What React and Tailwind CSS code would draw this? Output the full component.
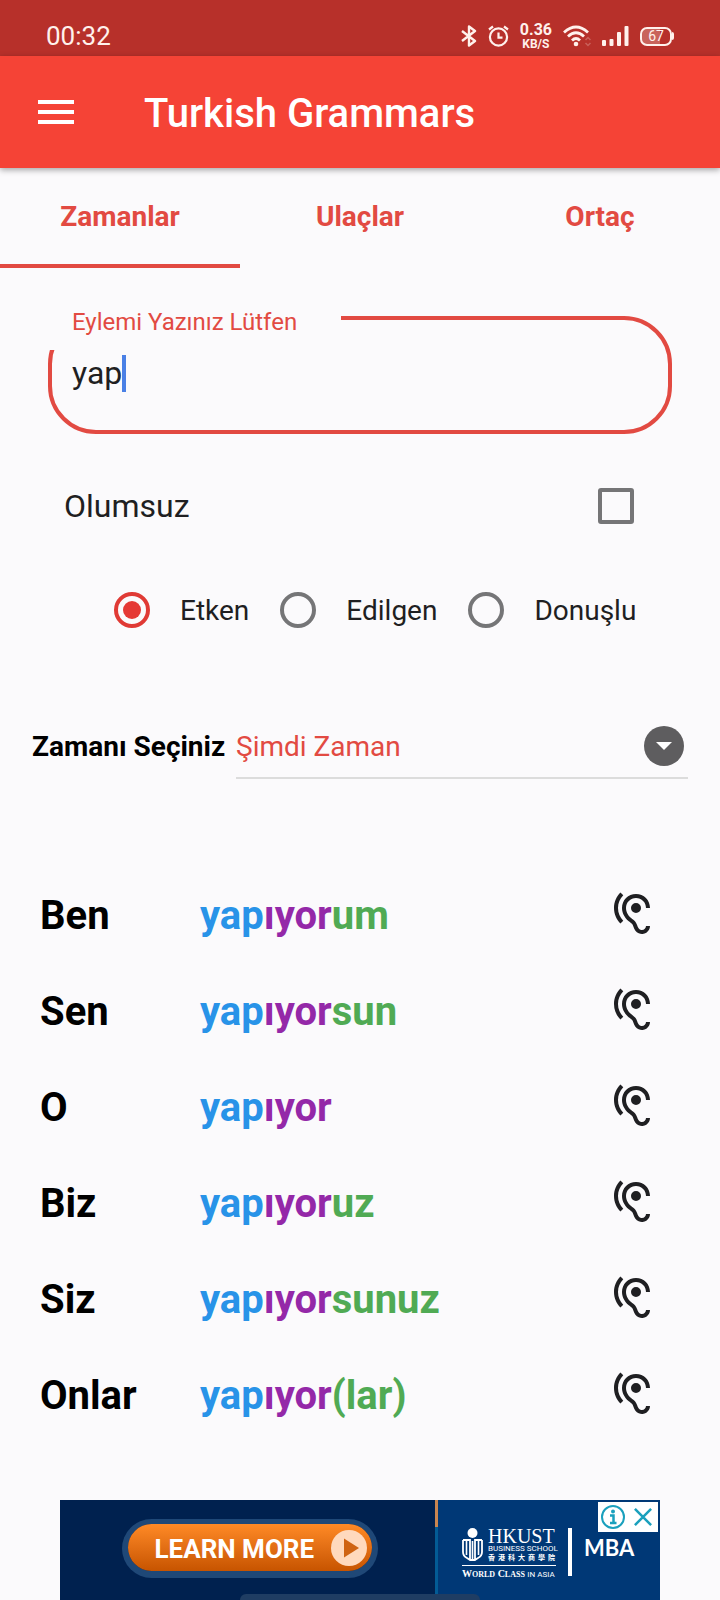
import { useState } from "react";
import { MdHearing } from "react-icons/md";

const RED = "text-[#e24a42]";

const rows = [
  { who: "Ben", end: "um" },
  { who: "Sen", end: "sun" },
  { who: "O", end: "" },
  { who: "Biz", end: "uz" },
  { who: "Siz", end: "sunuz" },
  { who: "Onlar", end: "(lar)" },
];

function StatusBar() {
  return (
    <div className="flex h-14 items-end justify-between bg-[#b7302a] pr-12 pb-1.5 pl-[46px] text-[#fff1ec]">
      <span className="text-[26px] leading-7">00:32</span>
      <div className="flex h-7 items-center gap-[11px]">
        <svg className="h-[22px] w-4" viewBox="0 0 16 22" fill="none" stroke="currentColor" strokeWidth="2.4">
          <path d="M1 6 L14 16 L8 20.5 V1.5 L14 6 L1 16" strokeLinejoin="round" />
        </svg>
        <svg className="h-[22px] w-[21px]" viewBox="0 0 21 22" fill="none" stroke="currentColor" strokeWidth="2.2">
          <circle cx="10.5" cy="12" r="8.6" />
          <path d="M10.5 7.5 V12.7 H14.5 M1 4.5 L5 1.5 M16 1.5 L20 4.5" />
        </svg>
        <div className="flex flex-col items-center font-bold">
          <span className="text-base leading-4">0.36</span>
          <span className="text-xs leading-3">KB/S</span>
        </div>
        <svg className="h-[22px] w-[28px]" viewBox="0 0 28 22" fill="none" stroke="currentColor" strokeWidth="2.8">
          <path d="M1 7.5 Q13 -3.5 25 7.5" />
          <path d="M5 11.5 Q13 4 21 11.5" />
          <path d="M9 15.5 Q13 11.5 17 15.5" />
          <circle cx="13" cy="19" r="2.3" fill="currentColor" stroke="none" />
          <path d="M22.5 15 L25 12.5 L27.5 15 M22.5 18 L25 20.5 L27.5 18" strokeWidth="1.5" opacity="0.25" />
        </svg>
        <svg className="h-[22px] w-[27px]" viewBox="0 0 27 22" fill="currentColor">
          <rect x="0" y="15" width="4" height="6" rx="1" />
          <rect x="7.5" y="14" width="4" height="7" rx="1" />
          <rect x="15" y="7" width="4" height="14" rx="1" />
          <rect x="22.5" y="1" width="4" height="20" rx="1" />
        </svg>
        <div className="relative flex h-[19px] w-8 items-center justify-center rounded-[7px] border-2 border-current bg-linear-to-r from-[#c9635b] from-65% to-[#b7302a] to-65% text-sm leading-4 after:absolute after:-right-1 after:h-2 after:w-0.5 after:rounded-r after:bg-current">
          67
        </div>
      </div>
    </div>
  );
}

function Ad() {
  return (
    <aside className="mx-[60px] grid h-[100px] grid-cols-[375fr_3px_222fr] overflow-hidden bg-[#00214f] text-white">
      <div className="flex items-start justify-center pt-6 pl-1">
        <button className="flex h-[47px] w-[244px] items-center justify-between rounded-full bg-linear-to-b from-[#ff8a25] to-[#c75400] pr-[5px] pl-[27px] shadow-[0_1px_0_6px_#1f4877]">
          <span className="pt-0.5 text-[26px] leading-8 font-bold whitespace-nowrap">LEARN MORE</span>
          <svg className="size-9 shrink-0" viewBox="0 0 36 36">
            <circle cx="18" cy="18" r="18" fill="#ffd9bd" />
            <path d="M13 8.5 L28 18 L13 27.5 Z" fill="#cf6312" />
          </svg>
        </button>
      </div>
      <div className="flex flex-col">
        <div className="h-[27px] bg-[#c98550]" />
        <div className="flex-1 bg-[#035b95]" />
      </div>
      <div className="relative flex items-start bg-[#003876] pt-7 pl-6">
        <div className="flex w-[94px] flex-col">
          <div className="flex gap-[5px] border-b border-white pb-[3px]">
            <svg className="h-[33px] w-[21px] shrink-0" viewBox="0 0 21 33" fill="none" stroke="white">
              <circle cx="10.5" cy="5" r="5" fill="white" stroke="none" />
              <path d="M1 12 V24 Q1 28 5 30 L8 32 V12 H1 M20 12 V24 Q20 28 16 30 L13 32 V12 H20 M8 32 H13" strokeWidth="1.8" />
              <path d="M4.5 13 V27 M16.5 13 V27 M10.5 13 V32" strokeWidth="1.6" />
            </svg>
            <div className="flex flex-col whitespace-nowrap">
              <span className="font-['Liberation_Serif'] text-[20px] leading-4">HKUST</span>
              <span className="text-[8px] leading-[9px]">BUSINESS SCHOOL</span>
              <span className="flex w-[67px] justify-between font-['Noto_Sans_CJK_TC'] text-[7px] leading-[9px] font-bold">
                {[..."香港科大商學院"].map((char) => (
                  <span key={char}>{char}</span>
                ))}
              </span>
            </div>
          </div>
          <div className="pt-[3px] text-[10px] leading-[10px] whitespace-nowrap">
            <span className="font-['Liberation_Serif'] font-bold">
              W<span className="text-[8px]">ORLD</span> C<span className="text-[8px]">LASS</span>
            </span>{" "}
            <span className="text-[8px]">IN ASIA</span>
          </div>
        </div>
        <div className="ml-3 h-12 w-1 bg-white" />
        <span className="mt-1.5 ml-3 font-['Lato'] text-[22px] leading-7 font-bold">MBA</span>
        <div className="absolute top-0.5 right-0.5 flex h-[30px] w-[60px] items-center justify-between bg-white pr-1.5 pl-[3px] text-[#1aa0bd]">
          <button aria-label="Ad information">
            <svg className="size-6" viewBox="0 0 24 24" fill="none" stroke="currentColor" strokeWidth="2">
              <circle cx="12" cy="12" r="11" />
              <circle cx="12" cy="6.5" r="2" fill="currentColor" stroke="none" />
              <path d="M9 10.5 H12.5 V18 M9 18 H15.5" strokeWidth="2.5" />
            </svg>
          </button>
          <button aria-label="Close ad">
            <svg className="size-[18px]" viewBox="0 0 20 20" stroke="currentColor" strokeWidth="2.8">
              <path d="M1 1 L19 19 M19 1 L1 19" />
            </svg>
          </button>
        </div>
      </div>
    </aside>
  );
}

export default function App() {
  const [voice, setVoice] = useState("Etken");
  return (
    <div className="relative min-h-screen overflow-hidden bg-[#fbfafc] font-['Roboto',sans-serif] text-[#1f1f22]">
      <StatusBar />
      <header className="relative flex h-28 items-center bg-[#f54336] pl-[38px] text-white shadow-[0_2px_6px_rgba(0,0,0,0.35)]">
        <button aria-label="Menu">
          <svg className="h-6 w-9" viewBox="0 0 36 24" fill="currentColor">
            <path d="M0 0H36V4H0ZM0 10H36V14H0ZM0 20H36V24H0Z" />
          </svg>
        </button>
        <h1 className="ml-[70px] pt-1 text-[40px] leading-12 font-medium">Turkish Grammars</h1>
      </header>
      <nav className={`grid h-[100px] grid-cols-3 text-[28px] leading-8 font-bold ${RED}`}>
        <button className="border-b-4 border-[#e24a42] pt-0.5">Zamanlar</button>
        <button className="border-b-4 border-transparent pt-0.5">Ulaçlar</button>
        <button className="border-b-4 border-transparent pt-0.5">Ortaç</button>
      </nav>

      <main>
        <div className="relative mx-12 mt-12 h-[118px] rounded-[48px] border-4 border-[#e24a42]">
          <label
            htmlFor="verb"
            className={`absolute -top-1 -left-1 h-[34px] w-[293px] bg-[#fbfafc] pl-6 text-2xl leading-3 ${RED}`}
          >
            Eylemi Yazınız Lütfen
          </label>
          <input
            id="verb"
            type="text"
            defaultValue="yap"
            className="mt-[33px] block h-10 w-full bg-transparent px-5 text-[32px] leading-10 outline-none"
          />
          <span className="absolute top-[35px] left-[70px] h-[37px] w-1 bg-[#4a80e6]" />
        </div>

        <div className="mt-[50px] flex h-11 items-center justify-between pr-[86px] pl-16">
          <label htmlFor="negative" className="text-[32px] leading-10">
            Olumsuz
          </label>
          <input
            id="negative"
            type="checkbox"
            className="size-9 appearance-none rounded-[3px] border-4 border-[#757577] checked:bg-[#e53935]"
          />
        </div>

        <div className="mt-16 flex h-9 items-center gap-[31px] pl-[114px] text-[28px] leading-8">
          {["Etken", "Edilgen", "Donuşlu"].map((name) => (
            <label key={name} className="flex items-center gap-[30px]">
              <input
                type="radio"
                name="voice"
                checked={voice === name}
                onChange={() => setVoice(name)}
                className="size-9 appearance-none rounded-full border-4 border-[#757577] checked:border-[#e03a35] checked:bg-[#e53935] checked:bg-clip-content checked:p-[5px]"
              />
              <span className="pt-0.5">{name}</span>
            </label>
          ))}
        </div>

        <div className="mt-[87px] flex items-center px-8 text-[28px] leading-8">
          <label htmlFor="tense" className="w-[204px] shrink-0 font-bold whitespace-nowrap text-black">
            Zamanı Seçiniz
          </label>
          <div className="relative flex-1">
            <select
              id="tense"
              className={`block h-16 w-full appearance-none border-y-2 border-t-transparent border-b-[#dcdcdc] bg-transparent ${RED}`}
            >
              <option>Şimdi Zaman</option>
            </select>
            <svg className="pointer-events-none absolute top-[11px] right-1 size-10" viewBox="0 0 40 40">
              <circle cx="20" cy="20" r="20" fill="#5e5d5f" />
              <path d="M12 16 H28 L20 24 Z" fill="white" />
            </svg>
          </div>
        </div>

        <table className="mt-[87px] w-full table-fixed text-[40px] leading-12 font-bold">
          <tbody>
            {rows.map(({ who, end }) => (
              <tr key={who} className="h-24">
                <th scope="row" className="w-[200px] pt-1 pl-10 text-left text-black">
                  {who}
                </th>
                <td className="pt-1 text-[#2893e8]">
                  yap<span className="text-[#9428a8]">ıyor</span>
                  <span className="text-[#50aa54]">{end}</span>
                </td>
                <td className="w-28">
                  <button aria-label={`Dinle: ${who}`} className="block">
                    <MdHearing className="size-12" />
                  </button>
                </td>
              </tr>
            ))}
          </tbody>
        </table>
      </main>

      <div className="mt-[58px]">
        <Ad />
      </div>
      <div className="absolute bottom-0 left-1/3 h-1.5 w-1/3 rounded-t-full bg-[#1f3d63]" />
    </div>
  );
}
